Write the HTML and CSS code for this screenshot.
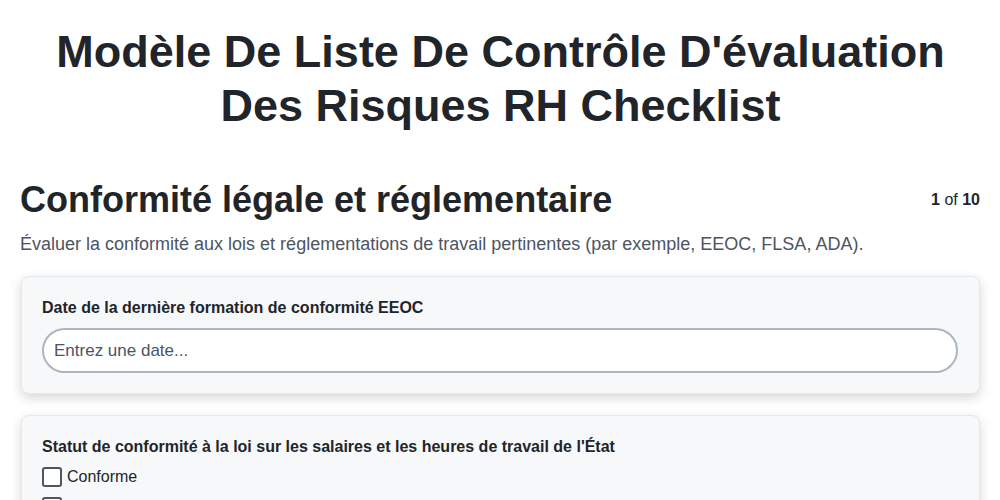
FILE: index.html
```html
<!DOCTYPE html>
<html lang="fr">
<head>
<meta charset="utf-8">
<title>Checklist</title>
<link rel="stylesheet" href="styles.css">
</head>
<body>
<main class="page">
  <h1 class="title">Modèle De Liste De Contrôle D'évaluation Des Risques RH Checklist</h1>
  <section class="section">
    <div class="section-head">
      <h2 class="section-title">Conformité légale et réglementaire</h2>
      <div class="counter"><b>1</b> of <b>10</b></div>
    </div>
    <p class="section-desc">Évaluer la conformité aux lois et réglementations de travail pertinentes (par exemple, EEOC, FLSA, ADA).</p>
    <div class="card">
      <label class="field-label" for="d1">Date de la dernière formation de conformité EEOC</label>
      <input class="text-input" id="d1" type="text" placeholder="Entrez une date...">
    </div>
    <div class="card">
      <div class="field-label">Statut de conformité à la loi sur les salaires et les heures de travail de l'État</div>
      <label class="check-row"><span class="box"></span><span>Conforme</span></label>
      <label class="check-row"><span class="box"></span><span>Partiellement conforme</span></label>
      <label class="check-row"><span class="box"></span><span>Non conforme</span></label>
    </div>
  </section>
</main>
</body>
</html>
```

FILE: styles.css
```css
* { box-sizing: border-box; }
html, body { margin: 0; padding: 0; background: #ffffff; }
body {
  font-family: "Liberation Sans", Arial, sans-serif;
  color: #212529;
}
.page {
  padding: 25px 20px 20px 21px;
}
.title {
  margin: 0 auto;
  max-width: 920px;
  text-align: center;
  font-size: 45px;
  line-height: 54px;
  font-weight: 700;
  color: #212529;
}
.section { margin-top: 45px; }
.section-head {
  display: flex;
  justify-content: space-between;
  align-items: center;
}
.section-title {
  margin: 0 0 0 -1px;
  font-size: 36px;
  line-height: 44px;
  font-weight: 700;
}
.counter {
  font-size: 16px;
  color: #212529;
}
.section-desc {
  margin: 10px 0 20px -1px;
  font-size: 18px;
  line-height: 24px;
  color: #4b5563;
}
.card {
  background: #f7f8fa;
  border: 1px solid #e5e7eb;
  border-radius: 8px;
  box-shadow: 0 4px 12px rgba(0, 0, 0, 0.16);
  padding: 21px 21px 20px 20px;
  margin-bottom: 21px;
}
.field-label {
  display: block;
  font-size: 16px;
  line-height: 20px;
  font-weight: 700;
  margin-bottom: 10px;
}
.text-input {
  display: block;
  width: 100%;
  height: 45px;
  border: 2px solid #adb5bd;
  border-radius: 23px;
  background: #ffffff;
  padding: 0 10px;
  font-family: "Liberation Sans", Arial, sans-serif;
  font-size: 17px;
  color: #212529;
}
.text-input::placeholder { color: #4b5563; opacity: 1; }
.check-row {
  display: flex;
  align-items: center;
  gap: 5px;
  font-size: 16px;
  line-height: 20px;
  margin-bottom: 10px;
}
.box {
  width: 20px;
  height: 20px;
  border: 2px solid #4b5563;
  border-radius: 3px;
  background: #ffffff;
  flex: none;
}
```
